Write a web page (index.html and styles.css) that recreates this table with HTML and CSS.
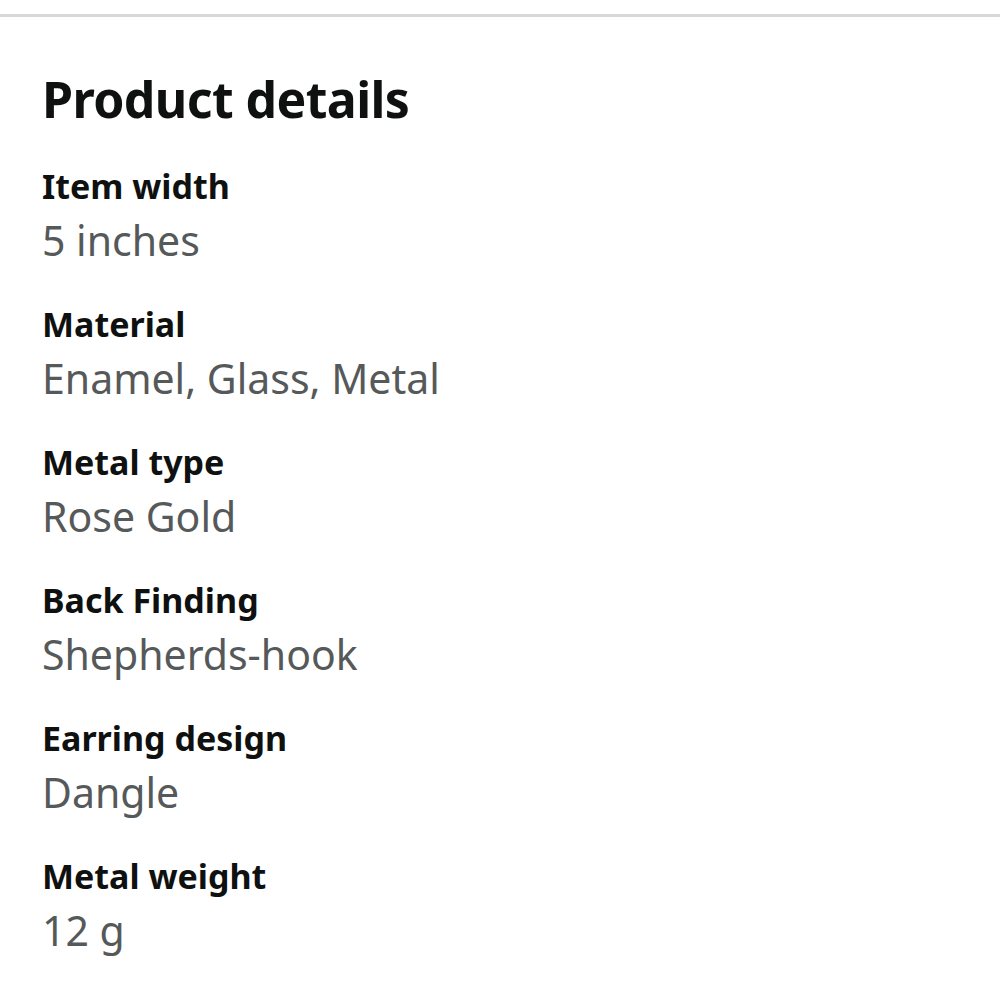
FILE: index.html
```html
<!DOCTYPE html>
<html lang="en">

<head>
    <meta charset="UTF-8">
    <meta name="viewport" content="width=device-width, initial-scale=1.0">
    <title>Product details</title>
    <link rel="stylesheet" href="styles.css">
</head>

<body>
    <div class="divider"></div>
    <div class="details">
        <h2 class="title">Product details</h2>
        <dl class="specs">
            <div class="spec">
                <dt class="label">Item width</dt>
                <dd class="value">5 inches</dd>
            </div>
            <div class="spec">
                <dt class="label">Material</dt>
                <dd class="value">Enamel, Glass, Metal</dd>
            </div>
            <div class="spec">
                <dt class="label">Metal type</dt>
                <dd class="value">Rose Gold</dd>
            </div>
            <div class="spec">
                <dt class="label">Back Finding</dt>
                <dd class="value">Shepherds-hook</dd>
            </div>
            <div class="spec">
                <dt class="label">Earring design</dt>
                <dd class="value">Dangle</dd>
            </div>
            <div class="spec">
                <dt class="label">Metal weight</dt>
                <dd class="value">12 g</dd>
            </div>
        </dl>
    </div>
</body>

</html>
```

FILE: styles.css
```css
body {
    margin: 0;
    background: #ffffff;
    font-family: "Noto Sans", "Open Sans", sans-serif;
    color: #0f1111;
}

.divider {
    margin-top: 14px;
    height: 3px;
    background: #d5d9d9;
}

.details {
    padding: 0 42px;
}

.title {
    margin: 0;
    padding-top: 50px;
    font-size: 50px;
    line-height: 64px;
    font-weight: 700;
    letter-spacing: -0.6px;
}

.specs {
    margin: 0;
    padding-top: 33px;
}

.spec {
    margin-bottom: 33px;
}

.label {
    font-size: 34px;
    line-height: 44px;
    font-weight: 700;
}

.value {
    margin: 3px 0 0;
    font-size: 41px;
    line-height: 58px;
    color: #565959;
}
```
